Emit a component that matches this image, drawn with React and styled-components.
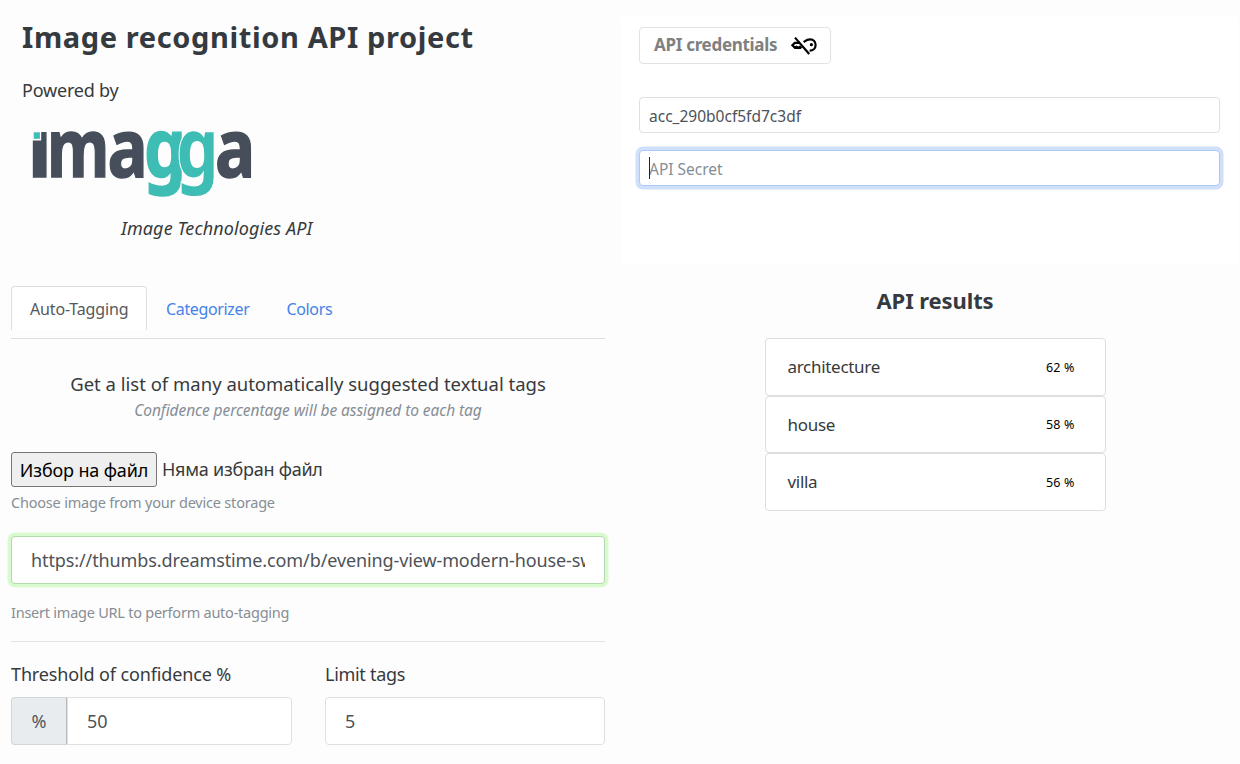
import React from "react";
import styled, { createGlobalStyle } from "styled-components";

const Global = createGlobalStyle`
  * { box-sizing: border-box; }
  body {
    margin: 0;
    background: #fdfdfd;
    color: #373a3c;
    font-family: "Noto Sans", "Open Sans", sans-serif;
    font-size: 18px;
    overflow: hidden;
  }
  input, button { font-family: inherit; margin: 0; outline: none; }
`;

const Page = styled.div`
  display: grid;
  grid-template-columns: 594px 617px;
  column-gap: 16px;
  width: 1240px;
  height: 764px;
  padding-left: 11px;
  align-items: start;
`;

const Column = styled.div`
  display: flex;
  flex-direction: column;
  min-width: 0;
`;

/* One line of copy; $h is its line box, $track its letter spacing. */
const Line = styled.div`
  height: ${(p) => p.$h}px;
  line-height: ${(p) => p.$h}px;
  font-size: ${(p) => p.$size || 18}px;
  letter-spacing: ${(p) => p.$track || 0}px;
  white-space: nowrap;
`;

const Header = styled.header`
  display: flex;
  flex-direction: column;
  height: 286px;
  padding: 17px 0 0 11px;
`;

const Title = styled(Line).attrs({ as: "h1" })`
  margin: 0 0 19px;
  font-weight: 700;
  color: #343a40;
`;

const LogoMark = styled.svg`
  display: block;
  width: 240px;
  height: 84px;
  margin: 15px 0 10px;
  overflow: visible;
`;

const Tagline = styled(Line)`
  padding-left: 99px;
  font-style: italic;
`;

const Tabs = styled.nav`
  display: flex;
  height: 53px;
  border-bottom: 1px solid #dcdfe2;
`;

const Tab = styled.a`
  width: ${(p) => p.$w}px;
  height: 44px;
  padding: 0 18px;
  line-height: 45px;
  font-size: 16px;
  letter-spacing: ${(p) => p.$track || 0}px;
  color: ${(p) => (p.$active ? "#55595c" : "#4582ec")};
  background: ${(p) => (p.$active ? "#fff" : "transparent")};
  border: 1px solid ${(p) => (p.$active ? "#dcdfe2" : "transparent")};
  border-bottom: 0;
  border-radius: 4px 4px 0 0;
  white-space: nowrap;
`;

const Intro = styled.section`
  margin-top: 31px;
  text-align: center;
`;

const SubIntro = styled(Line)`
  color: #868e96;
  font-style: italic;
`;

const FileRow = styled.div`
  display: flex;
  align-items: center;
  gap: 5px;
  height: 35px;
  margin-top: 30px;
`;

const FileButton = styled.button`
  width: 146px;
  height: 35px;
  padding: 0;
  border: 1px solid #767676;
  border-radius: 3px;
  background: #efefef;
  color: #000;
  font-size: 18px;
  letter-spacing: ${(p) => p.$track}px;
  white-space: nowrap;
`;

const Hint = styled(Line)`
  margin-top: ${(p) => p.$top || 0}px;
  color: #868e96;
`;

const Field = styled.input`
  display: block;
  width: ${(p) => (p.$w ? p.$w + "px" : "100%")};
  height: ${(p) => p.$h || 48}px;
  padding: ${(p) => p.$drop || 0}px ${(p) => p.$pad || 19}px 0;
  border: 1px solid ${(p) => p.$edge || "#dee0e2"};
  border-radius: ${(p) => p.$radius || "4px"};
  background: #fff;
  box-shadow: ${(p) => (p.$glow ? "0 0 0 3.5px " + p.$glow : "none")};
  color: #4d5257;
  font-size: ${(p) => p.$size || 18}px;
  letter-spacing: ${(p) => p.$track || 0}px;
  &::placeholder { color: #868e96; opacity: 1; }
`;

const UrlBlock = styled.div`
  margin-top: 18px;
  padding-bottom: 18px;
  border-bottom: 1px solid #dfe1e3;
`;

const Options = styled.div`
  display: grid;
  grid-template-columns: 281px 280px;
  column-gap: 33px;
  margin-top: 15px;
`;

const Label = styled(Line).attrs({ as: "label" })`
  display: block;
  margin-bottom: 5px;
`;

const Group = styled.div`
  display: flex;
`;

const Addon = styled.span`
  width: 56px;
  height: 48px;
  line-height: 47px;
  text-align: center;
  color: #55595c;
  background: #e9ecef;
  border: 1px solid #d3d6d9;
  border-right-color: #b9bcbf;
  border-radius: 4px 0 0 4px;
`;

const Credentials = styled.section`
  height: 247px;
  margin-top: 17px;
  padding: 10px 18px 0;
  background: #fff;
`;

const CredButton = styled.button`
  display: flex;
  align-items: center;
  width: 192px;
  height: 37px;
  margin-bottom: 33px;
  padding: 0 0 3px 14px;
  border: 1px solid #e0e2e4;
  border-radius: 4px;
  background: #fff;
  color: #808080;
  font-size: 17px;
  font-weight: 700;
  letter-spacing: ${(p) => p.$track}px;
  white-space: nowrap;
`;

const KeyIcon = styled.svg`
  width: 28px;
  height: 22px;
  margin: 3px 12px 0 auto;
  flex: none;
`;

const SecretBox = styled.div`
  position: relative;
  margin-top: 17px;
`;

const Caret = styled.span`
  position: absolute;
  left: 10px;
  top: 7px;
  width: 1px;
  height: 22px;
  background: #222;
`;

const Results = styled.section`
  display: flex;
  flex-direction: column;
  align-items: center;
  padding: 18px 0 0 11px;
`;

const ResultsTitle = styled(Line).attrs({ as: "h2" })`
  margin: 0 0 20px;
  color: #343a40;
  font-weight: 700;
`;

const Card = styled.div`
  display: flex;
  align-items: center;
  justify-content: space-between;
  width: 341px;
  height: 57.6px;
  padding: 1px 30px 0 22px;
  border: 1px solid #dcdee0;
  border-radius: 4px;
  background: #fff;
`;

const Percent = styled.span`
  color: #000;
  font-size: 12.5px;
  letter-spacing: 0.15px;
`;

const letters = [
  { c: "ı", x: 5.4, s: 1.02, teal: false },
  { c: "m", x: 25, s: 0.8, teal: false },
  { c: "a", x: 85.6, s: 0.84, teal: false },
  { c: "g", x: 122, s: 0.83, teal: true },
  { c: "g", x: 154.4, s: 0.83, teal: true, halo: true },
  { c: "a", x: 193.1, s: 0.84, teal: false },
];

function Logo() {
  return (
    <LogoMark viewBox="0 0 240 84" aria-label="imagga">
      <g fontFamily="Noto Sans" fontWeight="700" fontSize="80">
        {letters.map((l, i) => (
          <text
            key={i}
            transform={`translate(${l.x} 57) scale(${l.s} 1)`}
            fill={l.teal ? "#3dbdb3" : "#464e5b"}
            stroke={l.halo ? "#fdfdfd" : l.teal ? "#3dbdb3" : "#464e5b"}
            strokeWidth={l.halo ? 2.4 : 1.4}
            paintOrder="stroke"
          >
            {l.c}
          </text>
        ))}
      </g>
      <rect x="10" y="11" width="9.2" height="9.5" fill="#fdfdfd" />
      <rect x="11.7" y="12.3" width="6.2" height="6.5" fill="#3dbdb3" />
    </LogoMark>
  );
}

function KeyOff() {
  return (
    <KeyIcon viewBox="0 0 28 22" fill="none" stroke="#000" strokeWidth="2.2">
      <path d="M5 2.6 L19.2 19" />
      <path d="M13.6 7 C15.6 5.6 17 4.3 20.2 4.3 C23.4 4.3 25.6 6.8 25.6 9.9 C25.6 13.2 23.3 15.6 19.6 15.6" />
      <path d="M10 7.9 L4.8 7.9 L2.4 10.3 L4.8 12.6 L6.6 11.8 L8.2 12.9 L9.8 11.8 L11.6 13" />
      <circle cx="21.4" cy="9.7" r="1.6" fill="#000" stroke="none" />
    </KeyIcon>
  );
}

const tags = [
  ["architecture", "62 %"],
  ["house", "58 %"],
  ["villa", "56 %"],
];

export default function App() {
  return (
    <>
      <Global />
      <Page>
        <Column>
          <Header>
            <Title $h={40} $size={29} $track={0.62}>Image recognition API project</Title>
            <Line $h={29} $track={-0.2}>Powered by</Line>
            <Logo />
            <Tagline $h={28} $track={0.1}>Image Technologies API</Tagline>
          </Header>
          <Tabs>
            <Tab $active $w={136} $track={-0.15}>Auto-Tagging</Tab>
            <Tab $w={120.5} $track={-0.35}>Categorizer</Tab>
            <Tab $w={90} $track={-0.35}>Colors</Tab>
          </Tabs>
          <Intro>
            <Line $h={28} $size={18.5}>Get a list of many automatically suggested textual tags</Line>
            <SubIntro $h={24} $size={15.5} $track={-0.08}>Confidence percentage will be assigned to each tag</SubIntro>
          </Intro>
          <FileRow>
            <FileButton $track={-0.15}>Избор на файл</FileButton>
            <Line $h={35} $track={-0.25}>Няма избран файл</Line>
          </FileRow>
          <Hint $h={31} $size={14.5} $track={-0.2}>Choose image from your device storage</Hint>
          <UrlBlock>
            <Field
              readOnly
              value="https://thumbs.dreamstime.com/b/evening-view-modern-house-swimming-pool.jpg"
              $edge="#b5d8ae"
              $glow="#d9f9cf"
              $track={-0.11}
            />
            <Hint $top={18} $h={21} $size={14.5} $track={-0.24}>Insert image URL to perform auto-tagging</Hint>
          </UrlBlock>
          <Options>
            <div>
              <Label $h={35} $track={-0.13}>Threshold of confidence %</Label>
              <Group>
                <Addon>%</Addon>
                <Field readOnly value="50" $w={225} $radius="0 4px 4px 0" />
              </Group>
            </div>
            <div>
              <Label $h={35} $track={-0.3}>Limit tags</Label>
              <Field readOnly value="5" />
            </div>
          </Options>
        </Column>
        <Column>
          <Credentials>
            <CredButton $track={-0.3}>
              API credentials
              <KeyOff />
            </CredButton>
            <Field readOnly value="acc_290b0cf5fd7c3df" $h={36} $pad={9} $drop={2} $size={15.5} />
            <SecretBox>
              <Field readOnly placeholder="API Secret" $h={36} $pad={9} $drop={2} $size={15.5} $edge="#aac8f8" $glow="#d0e0fb" />
              <Caret />
            </SecretBox>
          </Credentials>
          <Results>
            <ResultsTitle $h={36} $size={22} $track={-0.1}>API results</ResultsTitle>
            {tags.map(([name, pct]) => (
              <Card key={name}>
                <Line $h={28} $size={17} $track={-0.3}>{name}</Line>
                <Percent>{pct}</Percent>
              </Card>
            ))}
          </Results>
        </Column>
      </Page>
    </>
  );
}
